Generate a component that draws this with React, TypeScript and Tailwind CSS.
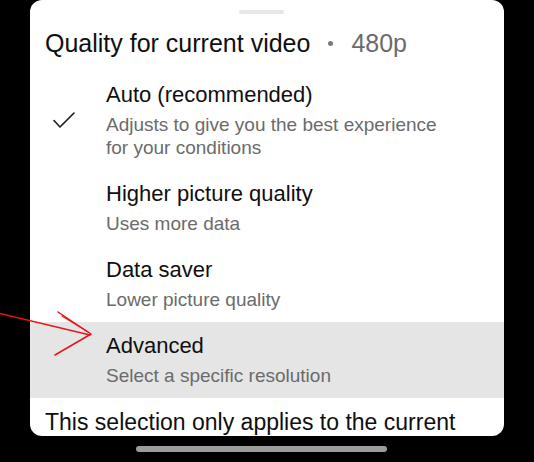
// Quality options shown in the sheet
const options = [
  { title: 'Auto (recommended)', lines: ['Adjusts to give you the best experience', 'for your conditions'], selected: true },
  { title: 'Higher picture quality', lines: ['Uses more data'] },
  { title: 'Data saver', lines: ['Lower picture quality'] },
  { title: 'Advanced', lines: ['Select a specific resolution'], active: true },
];

function CheckMark() {
  return (
    <svg width="22" height="17" viewBox="0 0 22 17" fill="none">
      <path d="M1 8.5 L7 15 L21 1" stroke="#1a1a1a" strokeWidth="1.6" strokeLinecap="round" strokeLinejoin="round" />
    </svg>
  );
}

export default function App() {
  return (
    <div
      className="relative w-[534px] h-[462px] bg-black overflow-hidden"
      style={{ fontFamily: '"Liberation Sans", Arial, sans-serif' }}
    >
      {/* Bottom sheet */}
      <div className="ml-[30px] w-[474px] h-[436px] bg-white rounded-[12px] overflow-hidden flex flex-col">
        <div className="shrink-0 mt-[10px] ml-[209px] w-[45px] h-[4px] rounded-full bg-[#e6e6e6]" />

        <div className="shrink-0 mt-[14px] mb-[13px] pl-[15px] flex items-center h-[30px] text-[25px] leading-[30px] whitespace-nowrap">
          <span className="text-[#0f0f0f]">Quality for current video</span>
          <span className="mx-[18px] w-[5px] h-[5px] rounded-full bg-[#7a7a7a]" />
          <span className="text-[#6a6a6a]">480p</span>
        </div>

        {options.map((opt) => (
          <div key={opt.title} className={`shrink-0 flex ${opt.active ? 'bg-[#e5e5e5]' : ''}`}>
            <div className="w-[76px] shrink-0 pl-[23px] flex items-center">
              {opt.selected && <CheckMark />}
            </div>
            <div className="pt-[11px] pb-[11px] whitespace-nowrap">
              <div className="text-[22px] leading-[26px] text-[#0f0f0f]">{opt.title}</div>
              <div className="mt-[5px] text-[19px] leading-[23px] text-[#6b6b6b]">
                {opt.lines.map((l) => (
                  <div key={l}>{l}</div>
                ))}
              </div>
            </div>
          </div>
        ))}

        <div className="shrink-0 mt-[10px] pl-[15px] pr-[15px] text-[23px] leading-[28px] text-[#0f0f0f]">
          This selection only applies to the current video
        </div>
      </div>

      {/* Home indicator */}
      <div className="mt-[10px] ml-[136px] w-[251px] h-[6px] rounded-full bg-[#9c9c9c]" />

      {/* Red annotation arrow drawn on top */}
      <svg className="absolute inset-0 pointer-events-none" width="534" height="462" viewBox="0 0 534 462" fill="none">
        <path d="M-2 313 L90 335" stroke="#e8141c" strokeWidth="1.5" strokeLinecap="round" />
        <path d="M58 312 L91 334 L55 355" stroke="#e8141c" strokeWidth="1.5" strokeLinecap="round" strokeLinejoin="round" />
        <path d="M62 316 L88 332" stroke="#e8141c" strokeWidth="1.2" strokeLinecap="round" />
      </svg>
    </div>
  );
}
